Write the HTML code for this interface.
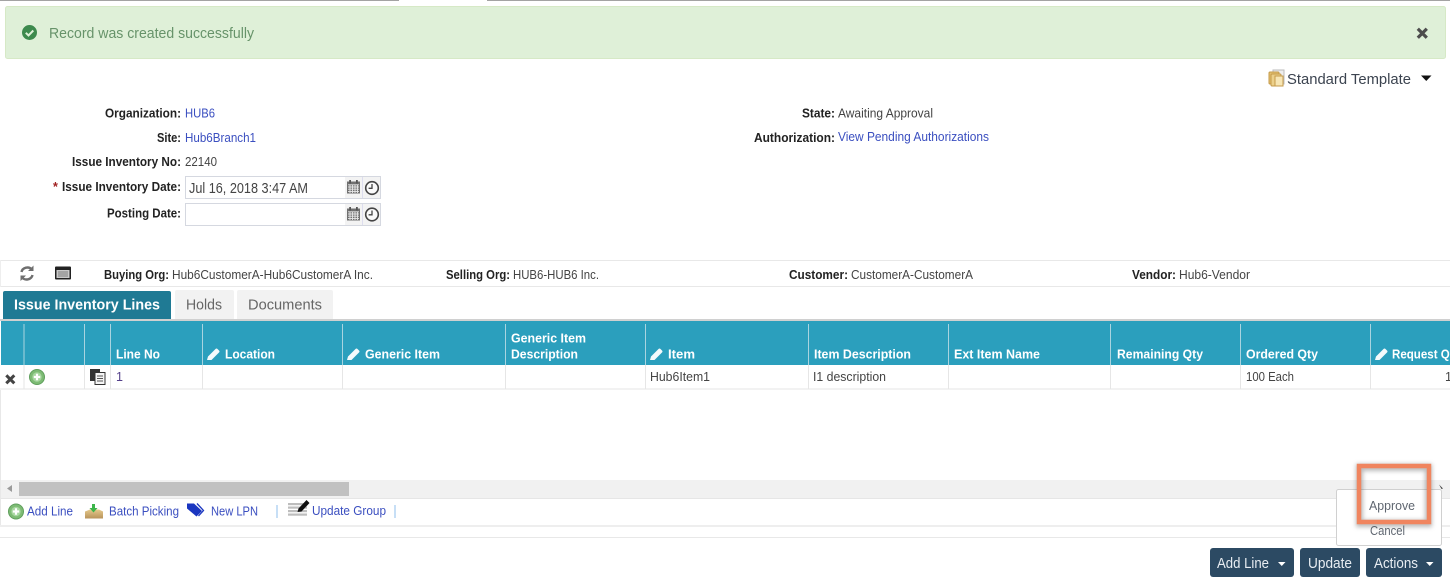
<!DOCTYPE html>
<html><head><meta charset="utf-8"><title>Issue Inventory</title>
<style>
html,body{margin:0;padding:0;background:#fff;width:1450px;height:586px;overflow:hidden}
svg{display:block;filter:blur(.35px)}
text{font-family:"Liberation Sans",sans-serif;font-size:12.5px;fill:#444;white-space:pre}
.b{font-weight:bold;fill:#222}
.l{fill:#3b4fc0}
.h{font-weight:bold;fill:#fff}
.v{fill:#444}
</style></head><body>
<svg width="1450" height="586" viewBox="0 0 1450 586" xmlns="http://www.w3.org/2000/svg">
<defs>
<g id="pen"><path d="M0 12 L1 8.500 L8.500 1 Q9.500 0 10.500 1 L12 2.500 Q13 3.500 12 4.500 L4.500 12 Z" fill="#f4fafc"/></g>
<g id="cal"><rect x="0" y="1.500" width="13" height="12" fill="#707070"/><path d="M1 4.800h11M1 7h11M1 9.200h11M1 11.400h11M3 4.500v8.500M5.500 4.500v8.500M8 4.500v8.500M10.500 4.500v8.500" stroke="#e8e8e8" stroke-width=".9"/><rect x="2.200" y="0" width="1.800" height="3.500" fill="#555"/><rect x="9" y="0" width="1.800" height="3.500" fill="#555"/></g>
<g id="clk"><circle cx="7" cy="7" r="6.300" fill="#fafafa" stroke="#444" stroke-width="1.600"/><path d="M7 3v4.300H3.600" fill="none" stroke="#444" stroke-width="1.300"/></g>
<g id="plus"><circle r="7.500" fill="#7dbb74" stroke="#5f9f5c"/><circle r="4.700" fill="#a7d7a0"/><path d="M-3.200 0h6.400M0-3.200v6.400" stroke="#fff" stroke-width="2.200"/></g>
<linearGradient id="box" x1="0" y1="0" x2="0" y2="1"><stop offset="0" stop-color="#e5c98c"/><stop offset="1" stop-color="#b8935a"/></linearGradient>
</defs>
<rect width="1450" height="586" fill="#fff"/>
<rect x="0" y="0" width="399" height="1" fill="#a3a3a3"/><rect x="487" y="0" width="963" height="1" fill="#a3a3a3"/>

<!-- alert -->
<rect x="5.500" y="6.500" width="1440" height="52" rx="2" fill="#dff0d8" stroke="#d6e9c6"/>
<circle cx="29.500" cy="32.500" r="7.500" fill="#3d8a4d"/>
<path d="M25.800 32.800l2.700 2.700 4.800-5" fill="none" stroke="#dff0d8" stroke-width="2"/>
<text x="49" y="38" textLength="205" lengthAdjust="spacingAndGlyphs" style="font-size:14.500px;fill:#67936a">Record was created successfully</text>
<path d="M1417.800 28.800l9 9M1426.800 28.800l-9 9" stroke="#4d4d4d" stroke-width="3.200"/>

<!-- template -->
<rect x="1273" y="70" width="11" height="14" fill="#eee" stroke="#bbb"/>
<rect x="1269" y="72" width="10" height="12" rx="1" fill="#e3c06f" stroke="#c49a4a"/>
<rect x="1271" y="74" width="10" height="12" rx="1" fill="#ecd08a" stroke="#c49a4a"/>
<rect x="1275" y="76" width="8" height="10" fill="#f7e6b5" stroke="#c49a4a"/>
<text x="1287" y="84" textLength="124" lengthAdjust="spacingAndGlyphs" style="font-size:14.500px;fill:#3c4450">Standard Template</text>
<path d="M1421 75.500h10.500l-5.250 5.500z" fill="#111"/>

<!-- form -->
<text class="b" x="105" y="117.500" textLength="76" lengthAdjust="spacingAndGlyphs">Organization:</text>
<text class="l" x="185" y="117.500" textLength="30" lengthAdjust="spacingAndGlyphs">HUB6</text>
<text class="b" x="157" y="142" textLength="24" lengthAdjust="spacingAndGlyphs">Site:</text>
<text class="l" x="185" y="142" textLength="71" lengthAdjust="spacingAndGlyphs">Hub6Branch1</text>
<text class="b" x="72" y="166" textLength="109" lengthAdjust="spacingAndGlyphs">Issue Inventory No:</text>
<text class="v" x="185" y="166" textLength="32" lengthAdjust="spacingAndGlyphs">22140</text>
<text x="53" y="191" style="font-weight:bold;fill:#a02020">*</text>
<text class="b" x="62" y="191" textLength="119" lengthAdjust="spacingAndGlyphs">Issue Inventory Date:</text>
<text class="b" x="107" y="217.500" textLength="74" lengthAdjust="spacingAndGlyphs">Posting Date:</text>

<rect x="185.500" y="176.500" width="195" height="22" fill="#fff" stroke="#d5d8e0"/>
<rect x="345" y="177" width="35" height="21" fill="#f3f3f3"/>
<rect x="362" y="177" width="1" height="21" fill="#dde"/>
<text x="189" y="193" textLength="119" lengthAdjust="spacingAndGlyphs" style="font-size:14.500px;fill:#444">Jul 16, 2018 3:47 AM</text>
<use href="#cal" x="347" y="180"/><use href="#clk" x="365" y="181"/>
<rect x="185.500" y="203.500" width="195" height="22" fill="#fff" stroke="#d5d8e0"/>
<rect x="345" y="204" width="35" height="21" fill="#f3f3f3"/>
<rect x="362" y="204" width="1" height="21" fill="#dde"/>
<use href="#cal" x="347" y="207"/><use href="#clk" x="365" y="207.500"/>

<text class="b" x="802" y="117.500" textLength="33" lengthAdjust="spacingAndGlyphs">State:</text>
<text class="v" x="838" y="117.500" textLength="95" lengthAdjust="spacingAndGlyphs">Awaiting Approval</text>
<text class="b" x="754" y="142" textLength="81" lengthAdjust="spacingAndGlyphs">Authorization:</text>
<text class="l" x="838" y="141" textLength="151" lengthAdjust="spacingAndGlyphs">View Pending Authorizations</text>

<!-- info strip -->
<rect x="0" y="260" width="1450" height="1" fill="#e8e8e8"/><rect x="0" y="286" width="1450" height="1" fill="#e8e8e8"/><rect x="0" y="260" width="1" height="27" fill="#eee"/>
<g fill="none" stroke="#6f6f6f" stroke-width="2.400"><path d="M21.500 272a6 5.500 0 0 1 10.500-2.500"/><path d="M32.500 275a6 5.500 0 0 1-10.500 2.500"/></g>
<path d="M33.500 265.500v5.500h-5.500zM20.500 281v-5.500h5.500z" fill="#6f6f6f"/>
<rect x="55" y="266.500" width="16" height="13" rx="1" fill="#222"/><rect x="56.500" y="270" width="13" height="8" fill="#c9c9c9"/><path d="M58 272h10M58 274h10M58 276h10" stroke="#666" stroke-width=".8"/>
<text class="b" x="104" y="279" textLength="65" lengthAdjust="spacingAndGlyphs">Buying Org:</text>
<text class="v" x="172" y="279" textLength="201" lengthAdjust="spacingAndGlyphs">Hub6CustomerA-Hub6CustomerA Inc.</text>
<text class="b" x="446" y="279" textLength="64" lengthAdjust="spacingAndGlyphs">Selling Org:</text>
<text class="v" x="513" y="279" textLength="86" lengthAdjust="spacingAndGlyphs">HUB6-HUB6 Inc.</text>
<text class="b" x="789" y="279" textLength="59" lengthAdjust="spacingAndGlyphs">Customer:</text>
<text class="v" x="851" y="279" textLength="122" lengthAdjust="spacingAndGlyphs">CustomerA-CustomerA</text>
<text class="b" x="1132" y="279" textLength="44" lengthAdjust="spacingAndGlyphs">Vendor:</text>
<text class="v" x="1179" y="279" textLength="71" lengthAdjust="spacingAndGlyphs">Hub6-Vendor</text>

<!-- tabs -->
<path d="M3 319v-26q0-2 2-2h164q2 0 2 2v26z" fill="#1f7a94"/>
<text x="14" y="309.500" textLength="146" lengthAdjust="spacingAndGlyphs" style="font-size:14.500px;font-weight:bold;fill:#fff">Issue Inventory Lines</text>
<path d="M175 319v-27q0-2 2-2h55q2 0 2 2v27z" fill="#f2f2f2"/>
<text x="186" y="309.500" textLength="36" lengthAdjust="spacingAndGlyphs" style="font-size:14.500px;fill:#666">Holds</text>
<path d="M237 319v-27q0-2 2-2h92q2 0 2 2v27z" fill="#f2f2f2"/>
<text x="248" y="309.500" textLength="74" lengthAdjust="spacingAndGlyphs" style="font-size:14.500px;fill:#666">Documents</text>
<rect x="0" y="319" width="1450" height="2" fill="#d0d0d0"/>

<!-- table header -->
<rect x="1" y="321" width="1449" height="44" fill="#2b9fbd"/>
<g fill="#a9d4e0">
<rect x="23.500" y="324" width="1" height="41"/><rect x="84" y="324" width="1" height="41"/><rect x="110" y="324" width="1" height="41"/><rect x="202" y="324" width="1" height="41"/><rect x="342" y="324" width="1" height="41"/><rect x="505" y="324" width="1" height="41"/><rect x="645" y="324" width="1" height="41"/><rect x="808" y="324" width="1" height="41"/><rect x="948" y="324" width="1" height="41"/><rect x="1110" y="324" width="1" height="41"/><rect x="1240" y="324" width="1" height="41"/><rect x="1370" y="324" width="1" height="41"/>
</g>
<text class="h" x="116" y="358.500" textLength="44" lengthAdjust="spacingAndGlyphs">Line No</text>
<use href="#pen" x="207" y="348"/><text class="h" x="225" y="358.500" textLength="50" lengthAdjust="spacingAndGlyphs">Location</text>
<use href="#pen" x="347" y="348"/><text class="h" x="365" y="358.500" textLength="75" lengthAdjust="spacingAndGlyphs">Generic Item</text>
<text class="h" x="511" y="342.500" textLength="75" lengthAdjust="spacingAndGlyphs">Generic Item</text>
<text class="h" x="511" y="358.500" textLength="67" lengthAdjust="spacingAndGlyphs">Description</text>
<use href="#pen" x="650" y="348"/><text class="h" x="668" y="358.500" textLength="27" lengthAdjust="spacingAndGlyphs">Item</text>
<text class="h" x="814" y="358.500" textLength="97" lengthAdjust="spacingAndGlyphs">Item Description</text>
<text class="h" x="954" y="358.500" textLength="86" lengthAdjust="spacingAndGlyphs">Ext Item Name</text>
<text class="h" x="1117" y="358.500" textLength="86" lengthAdjust="spacingAndGlyphs">Remaining Qty</text>
<text class="h" x="1246" y="358.500" textLength="72" lengthAdjust="spacingAndGlyphs">Ordered Qty</text>
<use href="#pen" x="1375" y="348"/><text class="h" x="1392" y="358.500" textLength="68" lengthAdjust="spacingAndGlyphs">Request Qty</text>

<!-- table row -->
<rect x="0" y="388.500" width="1450" height="1" fill="#e6e6e6"/>
<g fill="#e6e6e6">
<rect x="23.500" y="365" width="1" height="24"/><rect x="84" y="365" width="1" height="24"/><rect x="110" y="365" width="1" height="24"/><rect x="202" y="365" width="1" height="24"/><rect x="342" y="365" width="1" height="24"/><rect x="505" y="365" width="1" height="24"/><rect x="645" y="365" width="1" height="24"/><rect x="808" y="365" width="1" height="24"/><rect x="948" y="365" width="1" height="24"/><rect x="1110" y="365" width="1" height="24"/><rect x="1240" y="365" width="1" height="24"/><rect x="1370" y="365" width="1" height="24"/>
</g>
<path d="M6.300 375.300l8 8M14.300 375.300l-8 8" stroke="#444" stroke-width="3"/>
<use href="#plus" x="37" y="377"/>
<rect x="90" y="369" width="10" height="12" fill="#333"/>
<rect x="95" y="372.500" width="10" height="12" fill="#f5f5f5" stroke="#333"/>
<path d="M97 376h6M97 378.500h6M97 381h6" stroke="#555" stroke-width=".9"/>
<text class="v" x="116" y="381" style="fill:#54408a">1</text>
<text class="v" x="650" y="381" textLength="60" lengthAdjust="spacingAndGlyphs">Hub6Item1</text>
<text class="v" x="813" y="381" textLength="73" lengthAdjust="spacingAndGlyphs">I1 description</text>
<text class="v" x="1246" y="381" textLength="48" lengthAdjust="spacingAndGlyphs">100 Each</text>
<text class="v" x="1445" y="381">1</text>

<!-- scrollbar -->
<rect x="0" y="390" width="1" height="137" fill="#e8e8e8"/>
<rect x="1" y="480" width="1449" height="18" fill="#f1f1f1"/>
<rect x="1" y="498" width="1449" height="1" fill="#e6e6e6"/>
<rect x="19" y="482" width="330" height="14" fill="#c1c1c1"/>
<path d="M12 485v7l-5-3.500z" fill="#9a9a9a"/>
<path d="M1439 484.500l4 4-1.500.5z" fill="#444"/>

<!-- toolbar -->
<rect x="0" y="525" width="1450" height="2" fill="#eeeeee"/>
<rect x="0" y="537" width="1450" height="1" fill="#e8e8e8"/>
<use href="#plus" x="16" y="511.500"/>
<text class="l" x="27" y="515.500" textLength="46" lengthAdjust="spacingAndGlyphs">Add Line</text>
<path d="M85 518.500v-7l5-2h9l4 2v7z" fill="url(#box)"/>
<path d="M92 504h3v4h2.500L93.500 512.500 89.500 508H92z" fill="#3cb54a"/>
<text class="l" x="109" y="515.500" textLength="70" lengthAdjust="spacingAndGlyphs">Batch Picking</text>
<path d="M187 503.500h7l8 7.500-5.500 5.500-9.500-8z" fill="#1a36c0"/>
<path d="M197 503.500l6.500 7-5 5.500" fill="none" stroke="#1a36c0" stroke-width="1.300"/>
<text class="l" x="211" y="515.500" textLength="47" lengthAdjust="spacingAndGlyphs">New LPN</text>
<rect x="276.500" y="505" width="1" height="13" fill="#8fbfec"/>
<g fill="#bdbdbd"><rect x="288" y="503" width="19" height="2.200"/><rect x="288" y="506.500" width="19" height="2.200"/><rect x="288" y="510" width="19" height="2.200"/><rect x="288" y="513.500" width="19" height="2.200"/></g>
<path d="M297.500 512l1-3.500 8-8.500 3 3-8 8.500z" fill="#111"/>
<text class="l" x="312" y="515" textLength="74" lengthAdjust="spacingAndGlyphs">Update Group</text>
<rect x="394.500" y="505" width="1" height="13" fill="#8fbfec"/>

<!-- dropdown -->
<rect x="1336.500" y="489.500" width="105" height="56" rx="2" fill="#fff" stroke="#d0d0d0"/>
<text x="1370" y="535" textLength="35" lengthAdjust="spacingAndGlyphs" style="fill:#5f6670">Cancel</text>
<rect x="1359.500" y="467.500" width="69" height="56" fill="none" stroke="#555" stroke-opacity=".4" stroke-width="7" style="filter:blur(2px)"/>
<rect x="1359" y="466" width="70" height="56" fill="none" stroke="#f0855f" stroke-width="4.500"/>
<text x="1369" y="510" textLength="46" lengthAdjust="spacingAndGlyphs" style="fill:#5f6670">Approve</text>

<!-- buttons -->
<rect x="1210" y="548" width="84" height="29" rx="3" fill="#2c4a63"/>
<text x="1217" y="568" textLength="52" lengthAdjust="spacingAndGlyphs" style="font-size:14.500px;fill:#e8edf2">Add Line</text>
<path d="M1278 562h7.500l-3.750 4z" fill="#fff"/>
<rect x="1300" y="548" width="60" height="29" rx="3" fill="#2c4a63"/>
<text x="1308" y="568" textLength="44" lengthAdjust="spacingAndGlyphs" style="font-size:14.500px;fill:#e8edf2">Update</text>
<rect x="1366" y="548" width="76" height="29" rx="3" fill="#2c4a63"/>
<text x="1374" y="568" textLength="44" lengthAdjust="spacingAndGlyphs" style="font-size:14.500px;fill:#e8edf2">Actions</text>
<path d="M1426 562h7.500l-3.750 4z" fill="#fff"/>
</svg>
</body></html>
